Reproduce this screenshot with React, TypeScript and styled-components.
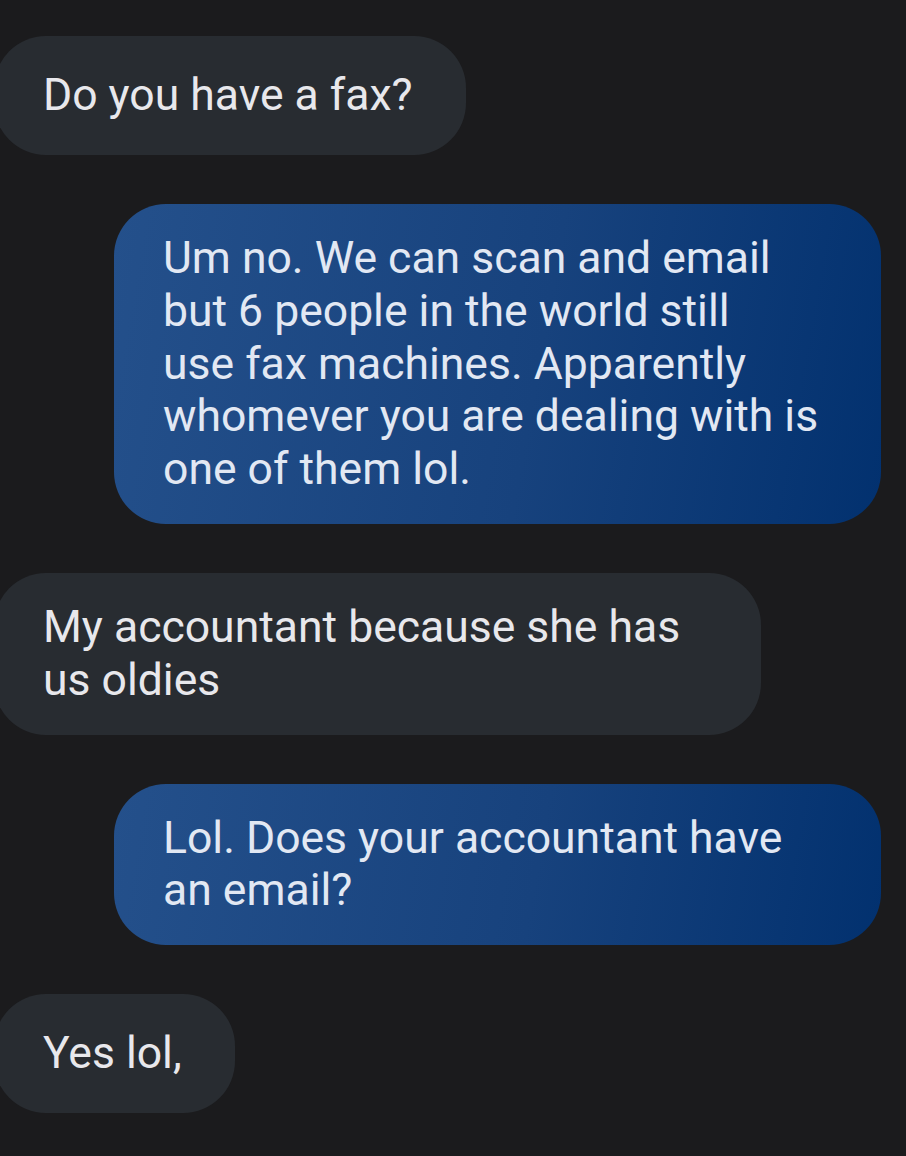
import styled, { createGlobalStyle } from "styled-components";

const GlobalStyle = createGlobalStyle`
  html, body {
    margin: 0;
    padding: 0;
    background: #1b1b1d;
  }
  body {
    font-family: Roboto, "Noto Sans", "Liberation Sans", sans-serif;
    overflow: hidden;
  }
`;

type Message = { id: number; mine: boolean; text: string };

// the phone balances its lines, so the one break it makes differently is written in
const messages: Message[] = [
  { id: 1, mine: false, text: "Do you have a fax?" },
  {
    id: 2,
    mine: true,
    text: "Um no. We can scan and email but 6 people in the world still\nuse fax machines. Apparently whomever you are dealing with is one of them lol.",
  },
  { id: 3, mine: false, text: "My accountant because she has us oldies" },
  { id: 4, mine: true, text: "Lol. Does your accountant have an email?" },
  { id: 5, mine: false, text: "Yes lol," },
];

export default function App() {
  return (
    <>
      <GlobalStyle />
      <Thread>
        {messages.map((m) => (
          <Row key={m.id} $mine={m.mine}>
            <Bubble $mine={m.mine}>{m.text}</Bubble>
          </Row>
        ))}
      </Thread>
    </>
  );
}

const Thread = styled.div`
  display: flex;
  flex-direction: column;
  gap: 49px;
  padding: 36px 25px 0 0;
  width: 906px;
  height: 1156px;
  box-sizing: border-box;
`;

const Row = styled.div<{ $mine: boolean }>`
  display: flex;
  justify-content: ${(p) => (p.$mine ? "flex-end" : "flex-start")};
  margin-left: ${(p) => (p.$mine ? "0" : "-6px")};
`;

const Bubble = styled.div<{ $mine: boolean }>`
  box-sizing: border-box;
  max-width: 767px;
  min-height: 119px;
  display: flex;
  align-items: center;
  padding: 28px 53px 28px 49px;
  border-radius: 52px;
  font-size: 44.5px;
  line-height: 52.8px;
  white-space: pre-line;
  color: ${(p) => (p.$mine ? "#e2e8f3" : "#e8e8ec")};
  background: ${(p) =>
    p.$mine
      ? "linear-gradient(100deg, #24508b 0%, #17427d 55%, #02316f 100%)"
      : "#282c31"};
`;
